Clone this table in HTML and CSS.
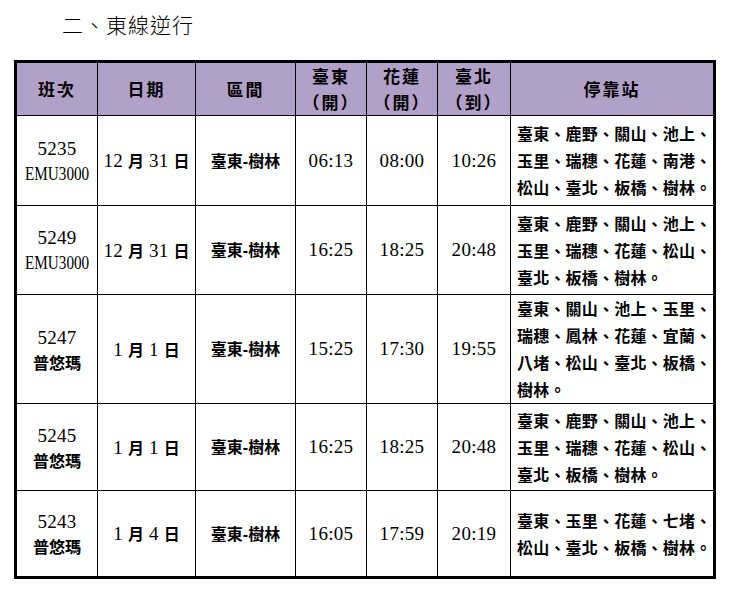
FILE: index.html
```html
<!DOCTYPE html>
<html lang="zh-Hant">
<head>
<meta charset="utf-8">
<title>二、東線逆行</title>
<link rel="stylesheet" href="styles.css">
</head>
<body>
<h2 class="title">二、東線逆行</h2>
<table class="sched">
  <colgroup>
    <col class="c1"><col class="c2"><col class="c3"><col class="c4"><col class="c5"><col class="c6"><col class="c7">
  </colgroup>
  <thead>
    <tr class="hrow">
      <th>班次</th>
      <th>日期</th>
      <th>區間</th>
      <th>臺東<br>（開）</th>
      <th>花蓮<br>（開）</th>
      <th>臺北<br>（到）</th>
      <th>停靠站</th>
    </tr>
  </thead>
  <tbody>
    <tr class="r90">
      <td class="train"><span class="num">5235</span><br><span class="num narrow">EMU3000</span></td>
      <td><span class="num d">12</span>月<span class="num d">31</span>日</td>
      <td>臺東<span class="dash">-</span>樹林</td>
      <td class="num">06:13</td>
      <td class="num">08:00</td>
      <td class="num">10:26</td>
      <td class="stops">臺東、鹿野、關山、池上、<br>玉里、瑞穗、花蓮、南港、<br>松山、臺北、板橋、樹林。</td>
    </tr>
    <tr class="r89">
      <td class="train"><span class="num">5249</span><br><span class="num narrow">EMU3000</span></td>
      <td><span class="num d">12</span>月<span class="num d">31</span>日</td>
      <td>臺東<span class="dash">-</span>樹林</td>
      <td class="num">16:25</td>
      <td class="num">18:25</td>
      <td class="num">20:48</td>
      <td class="stops">臺東、鹿野、關山、池上、<br>玉里、瑞穗、花蓮、松山、<br>臺北、板橋、樹林。</td>
    </tr>
    <tr class="r106">
      <td class="train"><span class="num">5247</span><br>普悠瑪</td>
      <td><span class="num d">1</span>月<span class="num d">1</span>日</td>
      <td>臺東<span class="dash">-</span>樹林</td>
      <td class="num">15:25</td>
      <td class="num">17:30</td>
      <td class="num">19:55</td>
      <td class="stops">臺東、關山、池上、玉里、<br>瑞穗、鳳林、花蓮、宜蘭、<br>八堵、松山、臺北、板橋、<br>樹林。</td>
    </tr>
    <tr class="r87">
      <td class="train"><span class="num">5245</span><br>普悠瑪</td>
      <td><span class="num d">1</span>月<span class="num d">1</span>日</td>
      <td>臺東<span class="dash">-</span>樹林</td>
      <td class="num">16:25</td>
      <td class="num">18:25</td>
      <td class="num">20:48</td>
      <td class="stops">臺東、鹿野、關山、池上、<br>玉里、瑞穗、花蓮、松山、<br>臺北、板橋、樹林。</td>
    </tr>
    <tr class="r87">
      <td class="train"><span class="num">5243</span><br>普悠瑪</td>
      <td><span class="num d">1</span>月<span class="num d">4</span>日</td>
      <td>臺東<span class="dash">-</span>樹林</td>
      <td class="num">16:05</td>
      <td class="num">17:59</td>
      <td class="num">20:19</td>
      <td class="stops">臺東、玉里、花蓮、七堵、<br>松山、臺北、板橋、樹林。</td>
    </tr>
  </tbody>
</table>
</body>
</html>
```

FILE: styles.css
```css
html, body {
  margin: 0;
  padding: 0;
  background: #ffffff;
}

body {
  font-family: "Noto Sans CJK TC", "Noto Sans CJK SC", sans-serif;
  color: #000;
}

.title {
  margin: 0;
  padding: 9px 0 0 62px;
  height: 60px;
  box-sizing: border-box;
  font-size: 21px;
  font-weight: 300;
  letter-spacing: 1px;
  line-height: 30px;
}

.sched {
  margin-left: 14px;
  border-collapse: collapse;
  table-layout: fixed;
  width: 702px;
  border: 3px solid #000;
}

.c1 { width: 82px; }
.c2 { width: 98px; }
.c3 { width: 100px; }
.c4 { width: 71px; }
.c5 { width: 71px; }
.c6 { width: 73px; }
.c7 { width: 204px; }

.sched th,
.sched td {
  border: 1px solid #000;
  padding: 0;
  text-align: center;
  vertical-align: middle;
}

.sched th {
  background: #b1a0c7;
  font-size: 17px;
  font-weight: 700;
  line-height: 26px;
  letter-spacing: 2px;
}

.hrow { height: 52px; }
.r90 { height: 90px; }
.r89 { height: 89px; }
.r106 { height: 106px; }
.r87 { height: 87px; }

.sched td {
  font-size: 16px;
  font-weight: 700;
  line-height: 24px;
}

.sched .num {
  font-family: "Liberation Serif", "Times New Roman", serif;
  font-size: 19px;
  font-weight: 400;
  letter-spacing: 0.3px;
}

.sched .narrow {
  display: inline-block;
  transform: scaleX(0.8);
  letter-spacing: 0;
}

.sched .d {
  margin: 0 5px;
}

.sched .d:first-child {
  margin-left: 0;
}

.dash {
  font-family: "Liberation Sans", sans-serif;
}

.sched td.stops {
  text-align: left;
  padding-left: 6px;
  font-size: 16px;
  line-height: 27px;
  white-space: nowrap;
  letter-spacing: 0.2px;
}
```
